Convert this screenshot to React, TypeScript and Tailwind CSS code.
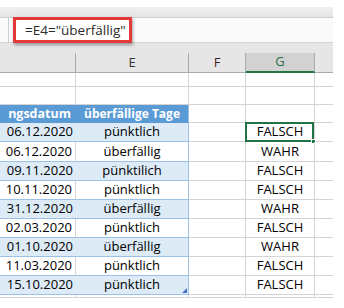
import React from 'react';

const rows = [
  { datum: '06.12.2020', status: 'pünktlich', result: 'FALSCH' },
  { datum: '06.12.2020', status: 'überfällig', result: 'WAHR' },
  { datum: '09.11.2020', status: 'pünktilich', result: 'FALSCH' },
  { datum: '10.11.2020', status: 'pünktlich', result: 'FALSCH' },
  { datum: '31.12.2020', status: 'überfällig', result: 'WAHR' },
  { datum: '02.03.2020', status: 'pünktlich', result: 'FALSCH' },
  { datum: '01.10.2020', status: 'überfällig', result: 'WAHR' },
  { datum: '11.03.2020', status: 'pünktlich', result: 'FALSCH' },
  { datum: '15.10.2020', status: 'pünktlich', result: 'FALSCH' },
];

const rowHeights = ['h-[19px]', 'h-[20px]', 'h-[19px]', 'h-[19px]', 'h-[19px]', 'h-[19px]', 'h-[19px]', 'h-[19px]', 'h-[19px]'];

function EmptyRow({ h }: { h: string }) {
  return (
    <div className={`flex ${h}`}>
      <div className="w-[76px] border-r border-b border-[#d4d4d4]" />
      <div className="w-[113px] border-r border-b border-[#d4d4d4]" />
      <div className="w-[57px] border-r border-b border-[#d4d4d4]" />
      <div className="w-[69px] border-r border-b border-[#d4d4d4]" />
      <div className="w-[18px] border-b border-[#d4d4d4]" />
    </div>
  );
}

export default function App() {
  return (
    <div className="w-[344px] h-[308px] bg-white overflow-hidden text-[13px] text-black" style={{ fontFamily: '"Open Sans", "Noto Sans", sans-serif' }}>
      <div className="h-[7px]" />
      <div className="w-[333px]">
        {/* ribbon edge */}
        <div className="h-[11px] bg-gradient-to-b from-[#f1f1f1] to-[#e3e3e3] border-b border-[#cfcfcf]" />

        {/* formula bar */}
        <div className="flex h-[25px] bg-[#fafafa] border-b border-[#d4d4d4]">
          <div className="w-[9px] border-r border-[#cfcfcf]" />
          <div className="ml-[4px] w-[119px] h-[26px] -mt-px bg-white border-[3px] border-[#e5383b] shadow-[1px_2px_3px_rgba(0,0,0,0.35)] flex items-center pl-[9px] text-[13.5px] text-[#2b2b2b] whitespace-nowrap">
            =E4="überfällig"
          </div>
        </div>

        <div className="h-[10px] bg-[#e6e6e6]" />

        {/* column headers */}
        <div className="flex h-[20px] bg-[#e6e6e6] text-[13px] text-[#333]">
          <div className="w-[76px] border-r border-b border-[#ababab]" />
          <div className="w-[113px] border-r border-b border-[#ababab] flex items-center justify-center">E</div>
          <div className="w-[57px] border-r border-b border-[#ababab] flex items-center justify-center text-[#3d1f2a]">F</div>
          <div className="w-[69px] border-r border-[#ababab] border-b-2 border-b-[#217346] bg-[#d2d2d2] flex items-center justify-center text-[#2f6a47]">G</div>
          <div className="w-[18px] border-b border-[#ababab]" />
        </div>

        <EmptyRow h="h-[14px]" />
        <EmptyRow h="h-[18px]" />

        {/* table header */}
        <div className="flex h-[18px]">
          <div className="w-[76px] bg-[#5b9bd5] text-white font-bold flex items-center justify-end pr-[5px] overflow-hidden whitespace-nowrap text-[12.5px]">ngsdatum</div>
          <div className="w-[113px] bg-[#5b9bd5] text-white font-bold flex items-center justify-center whitespace-nowrap text-[12px] border-r border-[#9bc2e6]">überfällige Tage</div>
          <div className="w-[57px] border-r border-b border-[#d4d4d4]" />
          <div className="w-[69px] border-r border-b border-[#d4d4d4]" />
          <div className="w-[18px] border-b border-[#d4d4d4]" />
        </div>

        {rows.map((r, i) => {
          const band = i % 2 === 0;
          const last = i === rows.length - 1;
          return (
            <div key={i} className={`flex ${rowHeights[i]}`}>
              <div className={`w-[76px] border-b border-b-[#9bc2e6] flex items-center justify-end pr-[3px] ${band ? 'bg-[#ddebf7]' : 'border-r border-r-[#d4d4d4]'}`}>
                {r.datum}
              </div>
              <div className={`relative w-[113px] border-r border-r-[#9bc2e6] border-b border-b-[#9bc2e6] flex items-center justify-center ${band ? 'bg-[#ddebf7]' : ''}`}>
                {r.status}
                {last && (
                  <svg className="absolute right-[1px] bottom-[1px]" width="5" height="5" viewBox="0 0 5 5">
                    <path d="M5 0 L5 5 L0 5 Z" fill="#4472c4" />
                  </svg>
                )}
              </div>
              <div className="w-[57px] border-r border-b border-[#d4d4d4]" />
              <div className="relative w-[69px] border-r border-b border-[#d4d4d4] flex items-center justify-center">
                {r.result}
                {i === 0 && (
                  <div className="absolute -left-px -top-px right-0 -bottom-px border-2 border-[#217346]">
                    <div className="absolute -right-[4px] -bottom-[4px] w-[5px] h-[5px] bg-[#217346] border border-white" />
                  </div>
                )}
              </div>
              <div className="w-[18px] border-b border-[#d4d4d4]" />
            </div>
          );
        })}

        <EmptyRow h="h-[3px]" />
      </div>
    </div>
  );
}
